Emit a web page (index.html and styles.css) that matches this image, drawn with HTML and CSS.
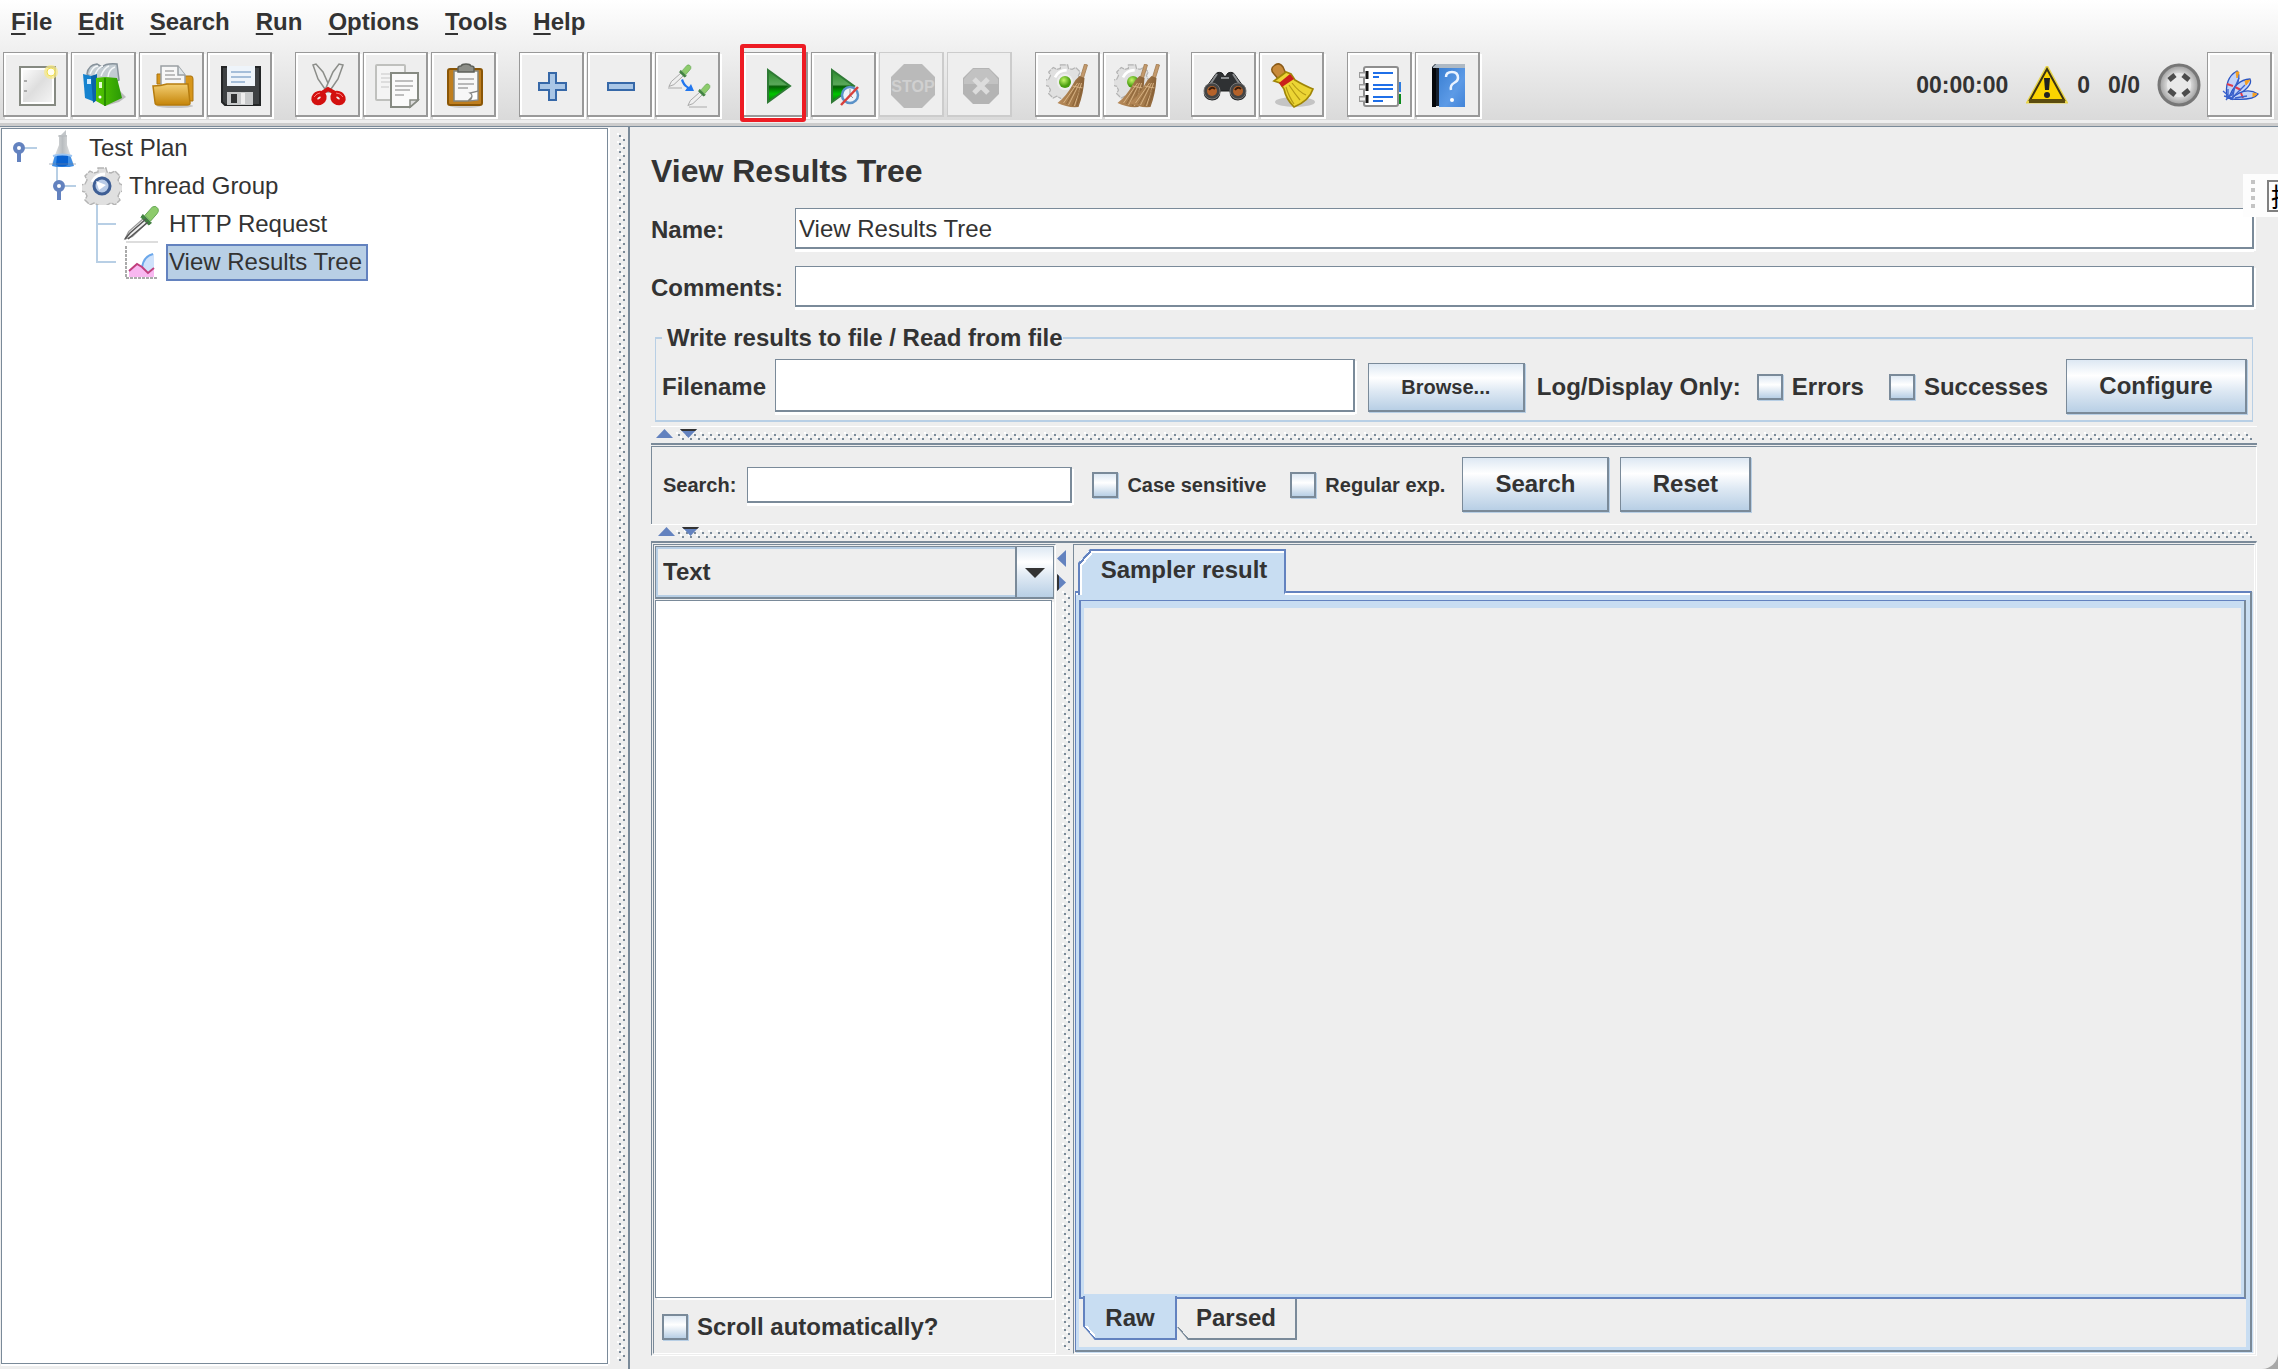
FILE: index.html
```html
<!DOCTYPE html>
<html lang="en">
<head>
<meta charset="utf-8">
<title>Apache JMeter</title>
<link rel="stylesheet" href="styles.css">
</head>
<body>
<svg width="0" height="0" class="defs" aria-hidden="true">
  <defs>
    <linearGradient id="paper" x1="0" y1="0" x2="1" y2="1"><stop offset="0" stop-color="#fbfbfb"/><stop offset=".5" stop-color="#dedede"/><stop offset="1" stop-color="#f4f4f4"/></linearGradient>
    <linearGradient id="folder" x1="0" y1="0" x2="0" y2="1"><stop offset="0" stop-color="#f3cf73"/><stop offset="1" stop-color="#c58408"/></linearGradient>
    <linearGradient id="green" x1="0" y1="0" x2="0" y2="1"><stop offset="0" stop-color="#2a8a2a"/><stop offset=".45" stop-color="#5aa85a"/><stop offset=".52" stop-color="#055f05"/><stop offset=".75" stop-color="#00c400"/><stop offset="1" stop-color="#0a7a0a"/></linearGradient>
    <linearGradient id="binder" x1="0" y1="0" x2="1" y2="0"><stop offset="0" stop-color="#55c800"/><stop offset="1" stop-color="#2b9a06"/></linearGradient>
    <linearGradient id="book" x1="0" y1="0" x2="1" y2="1"><stop offset="0" stop-color="#3a7fd2"/><stop offset=".6" stop-color="#5c9ae6"/><stop offset="1" stop-color="#4284d8"/></linearGradient>
    <linearGradient id="straw" x1="0" y1="0" x2="1" y2="0"><stop offset="0" stop-color="#b98b5a"/><stop offset=".5" stop-color="#a67c4c"/><stop offset="1" stop-color="#8a6238"/></linearGradient>
    <linearGradient id="glass" x1="0" y1="0" x2="1" y2="0"><stop offset="0" stop-color="#f2f2f2"/><stop offset=".5" stop-color="#b9bdc0"/><stop offset="1" stop-color="#f0f0f0"/></linearGradient>
    <radialGradient id="metal"><stop offset="0" stop-color="#fff"/><stop offset=".6" stop-color="#d8d8d8"/><stop offset="1" stop-color="#9a9a9a"/></radialGradient>
    <radialGradient id="ball" cx=".4" cy=".35"><stop offset="0" stop-color="#c6f76a"/><stop offset="1" stop-color="#4a9e10"/></radialGradient>
    <symbol id="gear" viewBox="-20 -20 40 40">
      <path d="M-4-18h8l1 4 4 1 4-2 5 5-2 4 2 4 3 1v6l-3 1-2 4 2 4-5 5-4-2-4 2-1 3h-7l-1-3-4-2-4 2-5-5 2-4-2-4-4-1v-6l4-1 2-4-2-4 5-5 4 2 4-1z" fill="#e0e0e0" stroke="#b4b4b4" stroke-width="1.4" stroke-dasharray="6 1"/>
      <path d="M-10-4Q-6-12 3-12" stroke="#fff" stroke-width="3" fill="none"/>
    </symbol>
    <symbol id="dropper" viewBox="0 0 40 40">
      <path d="M3 36 L7 28 L24 13 L28 17 L11 33Z" fill="#efefef" stroke="#999" stroke-width="1.3"/>
      <path d="M22 10 L31 19 L28 21 L20 13Z" fill="#3f853f" stroke="#3a743a"/>
      <path d="M24 11 L32 2 Q36 0 38 4 Q39 7 37 9 L30 17Z" fill="#8dcb6c" stroke="#62a451"/>
    </symbol>
    <symbol id="broom" viewBox="0 0 30 44">
      <path d="M27 0 L30 1 L26 14 L23 13Z" fill="#c49a6c" stroke="#a07b50" stroke-width=".8"/>
      <path d="M22 12 Q18 15 15 21 Q9 32 0 39 Q10 44 21 43 Q26 30 27 14Z" fill="url(#straw)"/>
      <path d="M20 19L6 39M22 19L11 41M24 19L17 42M15 22l10 2" stroke="#d7b283" stroke-width="1" fill="none"/>
      <path d="M18 24L9 40M23 24L15 42M25 24L19 42" stroke="#80592f" stroke-width=".6" fill="none"/>
    </symbol>
  </defs>
</svg>
<div class="app">
  <header class="top">
    <nav class="menubar" aria-label="Main menu">
      <button type="button"><u>F</u>ile</button>
      <button type="button"><u>E</u>dit</button>
      <button type="button"><u>S</u>earch</button>
      <button type="button"><u>R</u>un</button>
      <button type="button"><u>O</u>ptions</button>
      <button type="button"><u>T</u>ools</button>
      <button type="button"><u>H</u>elp</button>
    </nav>
    <div class="toolbar">
      <div class="group">
        <button type="button" class="tool" aria-label="New"><svg viewBox="1 1 62 62">
          <rect x="17" y="15" width="35" height="38" fill="#fff" stroke="#868a82" stroke-width="2"/><rect x="20" y="18" width="29" height="32" fill="url(#paper)"/>
          <path d="M21 29h3M21 39h3" stroke="#aaa" stroke-width="2"/><circle cx="48" cy="20" r="7" fill="#f7e98a" opacity=".75"/><circle cx="48" cy="20" r="4" fill="#fffef0" stroke="#f0de4c"/></svg></button>
        <button type="button" class="tool" aria-label="Templates"><svg viewBox="1 1 62 62">
          <path d="M46 36l9 9-7 5-14 4z" fill="#999" opacity=".6"/>
          <path d="M16 22q1-9 10-10l5 3q4-4 15-3l2 16-20 8z" fill="#c3ccd2" stroke="#87929b" stroke-width="1.5"/><path d="M19 22q3-8 8-8M24 23q3-8 8-9M30 24q3-8 8-10M37 25q1-8 7-10" stroke="#f4f7f9" stroke-width="1.5" fill="none"/>
          <path d="M12 22l12 3v25l-10-4z" fill="#1683cf"/><path d="M20 24l6-2v26l-4 3z" fill="#0b63a8"/><rect x="16" y="27" width="4" height="5" fill="#cdeaff"/>
          <path d="M25 26l9-1 12 1 5 20-17 8-9-5z" fill="url(#binder)"/><path d="M34 26v28" stroke="#1d7b00" stroke-width="1.5"/><rect x="28" y="30" width="3" height="6" fill="#e4ffd0"/><circle cx="29" cy="45" r="1.5" fill="#fff"/></svg></button>
        <button type="button" class="tool" aria-label="Open"><svg viewBox="1 1 62 62">
          <ellipse cx="36" cy="54" rx="18" ry="2" fill="#aaa" opacity=".6"/>
          <path d="M18 22h6v10H18zM42 24h10q2 0 2 3v22H42z" fill="#d7961b" stroke="#ab7410"/>
          <path d="M22 14h17l7 9v13H22z" fill="#f7f7f7" stroke="#9aa0a4" stroke-width="1.5"/><path d="M39 14v9h7" fill="#dfe6ea" stroke="#9aa0a4" stroke-width="1.5"/><path d="M26 19h9M26 23h10M26 27h16" stroke="#aaa" stroke-width="1.5"/>
          <path d="M14 34q8 0 14-2h21l2 19q0 2-3 2H19q-3 0-3-3z" fill="url(#folder)" stroke="#b67c0e" stroke-width="1.5"/></svg></button>
        <button type="button" class="tool" aria-label="Save"><svg viewBox="1 1 62 62">
          <path d="M15 15h38v38H18l-3-3z" fill="#3e4143" stroke="#232526" stroke-width="2"/>
          <rect x="20" y="14" width="28" height="20" fill="#eef4fa"/><path d="M24 20h20M24 25h20M24 30h14" stroke="#a5bed9" stroke-width="2"/>
          <rect x="20" y="40" width="26" height="13" fill="#c7c9ca"/><rect x="24" y="42" width="6" height="9" fill="#303233"/><path d="M36 41v11" stroke="#eee" stroke-width="4"/></svg></button>
      </div>
      <div class="group">
        <button type="button" class="tool" aria-label="Cut"><svg viewBox="1 1 62 62">
          <path d="M18 13l3-1 7 8 8 18-4 2-9-13z" fill="#eee" stroke="#8b8d89" stroke-width="1.5"/><path d="M48 13l-4-1-6 8-8 18 4 2 9-13z" fill="#eee" stroke="#8b8d89" stroke-width="1.5"/>
          <ellipse cx="24" cy="46" rx="5" ry="4" transform="rotate(-35 24 46)" fill="none" stroke="#d3100f" stroke-width="6"/><ellipse cx="43" cy="46" rx="5" ry="4" transform="rotate(35 43 46)" fill="none" stroke="#d3100f" stroke-width="6"/>
          <path d="M27 41l6-4 7 4" stroke="#d3100f" stroke-width="4" fill="none"/><path d="M19 45q3-4 6-4M41 41q5 0 7 4" stroke="#ff7a7a" fill="none"/></svg></button>
        <button type="button" class="tool" aria-label="Copy"><svg viewBox="1 1 62 62">
          <rect x="13" y="13" width="29" height="35" rx="1" fill="#f4f4f4" stroke="#bfc0bd" stroke-width="2"/><path d="M18 22h15M18 26h15M18 30h10M18 35h8" stroke="#d5d5d5" stroke-width="1.5"/>
          <path d="M28 21h27v27l-8 7H28z" fill="#fafafa" stroke="#868a82" stroke-width="2"/><path d="M32 29h18M32 34h18M32 38h15M32 43h9" stroke="#aaa" stroke-width="1.5"/><path d="M47 55v-7h8z" fill="#ddd" stroke="#868a82" stroke-width="1.5"/></svg></button>
        <button type="button" class="tool" aria-label="Paste"><svg viewBox="1 1 62 62">
          <ellipse cx="34" cy="54" rx="15" ry="2" fill="#aaa" opacity=".5"/><rect x="17" y="17" width="34" height="36" rx="2" fill="#bf7e1e" stroke="#8a5606" stroke-width="2"/>
          <path d="M23 19h24v20l-10 10H23z" fill="#f7f7f7" stroke="#82857e" stroke-width="1.5"/><path d="M27 27h16M27 32h16M27 36h10" stroke="#a4a4a4" stroke-width="1.6"/><path d="M47 39v9l-8 1q4-6 0-8z" fill="#fff" stroke="#888" stroke-width="1.3"/>
          <path d="M27 20v-4q0-2 3-2 1-2 5-2t5 2q3 0 3 2v4z" fill="#8c8e88" stroke="#5d605a" stroke-width="1.5"/></svg></button>
      </div>
      <div class="group">
        <button type="button" class="tool" aria-label="Expand all"><svg viewBox="1 1 62 62">
          <path d="M30 21h7v10h10v7H37v10h-7V38H20v-7h10z" fill="#a9c6e6" stroke="#3668a8" stroke-width="2"/></svg></button>
        <button type="button" class="tool" aria-label="Collapse all"><svg viewBox="1 1 62 62"><rect x="21" y="31" width="26" height="7" fill="#a9c6e6" stroke="#3668a8" stroke-width="2"/></svg></button>
        <button type="button" class="tool" aria-label="Toggle"><svg viewBox="1 1 62 62">
          <path d="M13 36h14M34 55h18" stroke="#aaa"/><use href="#dropper" x="12" y="12" width="25" height="25"/><use href="#dropper" x="31" y="31" width="25" height="25"/>
          <path d="M28 27q2 6 6 8l2-3 3 7-9 0 2-3q-5-3-6-8z" fill="#2277ee"/></svg></button>
      </div>
      <div class="group">
        <div class="marked">
          <button type="button" class="tool" aria-label="Start"><svg viewBox="1 1 62 62"><path d="M25 18L47 34 25 50z" fill="url(#green)" stroke="#2f7a35" stroke-width="2"/></svg></button>
        </div>
        <button type="button" class="tool" aria-label="Start no pauses"><svg viewBox="1 1 62 62"><path d="M21 18L43 34 21 50z" fill="url(#green)" stroke="#2f7a35" stroke-width="2"/>
          <circle cx="39" cy="43" r="8" fill="#eef3f9" stroke="#5b92c8" stroke-width="2.5"/><path d="M39 37v6l3 3" stroke="#999" fill="none"/><path d="M47 35L30 53" stroke="#d8403c" stroke-width="2.5"/></svg></button>
        <button type="button" class="tool" aria-label="Stop" disabled><svg viewBox="1 1 62 62"><path d="M25 12h18l13 13v18L43 56H25L12 43V25z" fill="#bababa"/><text x="34" y="40" class="stop-word">STOP</text></svg></button>
        <button type="button" class="tool" aria-label="Shutdown" disabled><svg viewBox="1 1 62 62"><path d="M26 16h16l10 10v16L42 52H26L16 42V26z" fill="#b4b4b4"/><path d="M17 27L26 17h16l9 10v5H17z" fill="#c2c2c2"/><path d="M27 27l14 14M41 27L27 41" stroke="#dcdcdc" stroke-width="5"/></svg></button>
      </div>
      <div class="group">
        <button type="button" class="tool" aria-label="Clear"><svg viewBox="1 1 62 62"><use href="#gear" x="11" y="11" width="36" height="36"/><circle cx="30" cy="30" r="8" fill="#eee" /><circle cx="30" cy="30" r="6" fill="url(#ball)"/><use href="#broom" x="22" y="12" width="31" height="44"/></svg></button>
        <button type="button" class="tool" aria-label="Clear all"><svg viewBox="1 1 62 62"><use href="#gear" x="11" y="11" width="36" height="36"/><circle cx="30" cy="30" r="6" fill="url(#ball)"/><use href="#broom" x="14" y="12" width="31" height="44"/><use href="#broom" x="26" y="12" width="31" height="44"/></svg></button>
      </div>
      <div class="group">
        <button type="button" class="tool" aria-label="Search"><svg viewBox="1 1 62 62">
          <path d="M24 23q2-4 7-2l3 4 3-4q5-2 7 2l10 14q3 10-7 11-8 0-8-9h-10q0 9-8 9-10-1-7-11z" fill="#2f3133" stroke="#1b1c1d"/>
          <path d="M18 34l8-12M42 22l8 12M30 26h8" stroke="#8b8e90" stroke-width="2" fill="none"/><circle cx="21" cy="39" r="8" fill="#444" stroke="#777"/><circle cx="21" cy="39" r="5" fill="#b5622a"/><circle cx="47" cy="39" r="8" fill="#444" stroke="#777"/><circle cx="47" cy="39" r="5" fill="#b5622a"/><path d="M18 38q3-4 6-1M44 38q3-4 6-1" stroke="#3b1c08" stroke-width="2" fill="none"/></svg></button>
        <button type="button" class="tool" aria-label="Reset search"><svg viewBox="1 1 62 62">
          <ellipse cx="36" cy="50" rx="20" ry="5" fill="#999" opacity=".5"/><path d="M16 13q5-3 8 2l4 9-7 5-6-7q-5-5 1-9z" fill="#c88a3a" stroke="#8a5a17" stroke-width="1.5"/>
          <path d="M15 29l12-9 5 2 4 6q10 6 18 9-4 12-19 18-8-8-10-18l-4-6z" fill="#ecd534" stroke="#a08608" stroke-width="1.7"/><path d="M20 31l11-9 4 5-12 8z" fill="#c9201c"/><path d="M27 35q3 10 8 17M30 33q6 9 11 15M33 31q7 9 14 12" stroke="#b59a15" stroke-width="1.2" fill="none"/></svg></button>
      </div>
      <div class="group">
        <button type="button" class="tool" aria-label="Function helper"><svg viewBox="1 1 62 62">
          <rect x="49" y="30" width="5" height="10" fill="#2f7de0"/><rect x="49" y="42" width="5" height="10" fill="#0c8a1c"/><rect x="17" y="15" width="34" height="39" rx="2" fill="#fff" stroke="#8e8e8e" stroke-width="2"/>
          <path d="M12 23h6M12 35h6M12 47h6" stroke="#999" stroke-width="6"/><path d="M13 23h5M13 35h5M13 47h5" stroke="#eee" stroke-width="3"/><path d="M20 19v8M20 31v8M20 43v8" stroke="#111" stroke-width="3"/>
          <path d="M26 21h20M26 25h6M26 33h20M26 37h20M26 45h20M26 49h10" stroke="#1f6fe8" stroke-width="2"/></svg></button>
        <button type="button" class="tool" aria-label="Help"><svg viewBox="1 1 62 62">
          <path d="M17 15l3-3h30v42H17z" fill="#16202d"/><path d="M18 15l3-3h29v4H18z" fill="#aeb9c4"/><path d="M24 16h26v39H24z" fill="url(#book)"/><path d="M17 16h4v39h-4z" fill="#05070a"/><path d="M31 25q0-5 6-5t6 6q0 3-4 5t-3 7" stroke="#eaf3ff" stroke-width="2.5" fill="none"/><circle cx="37" cy="48" r="2" fill="#fff"/></svg></button>
      </div>
      <div class="status">
        <span class="timer">00:00:00</span>
        <svg class="warn" viewBox="0 0 42 38" aria-label="Errors logged"><path d="M21 1L40 36H2z" fill="#fbd300" stroke="#e8d44a" stroke-width="3"/><path d="M21 3L38 34H4z" fill="#fbd300" stroke="#3d3413" stroke-width="2"/><path d="M3 35h36" stroke="#5c4c0e" stroke-width="4"/><path d="M18 12h6l-1 12h-4z" fill="#222"/><circle cx="21" cy="29" r="3" fill="#222"/></svg>
        <span class="errors">0</span>
        <span class="threads">0/0</span>
        <svg class="remote" viewBox="0 0 44 44" aria-label="Remote hosts"><circle cx="22" cy="22" r="20" fill="url(#metal)" stroke="#777" stroke-width="3"/><circle cx="22" cy="22" r="12" fill="#e9e9e9"/><path d="M12 17l6-5M26 12l6 5M12 27l6 5M26 32l6-5" stroke="#4c4c4c" stroke-width="5"/></svg>
        <button type="button" class="tool" aria-label="About"><svg viewBox="1 1 62 62">
          <g fill="#c3d3f7" stroke="#2a55c4" stroke-width="1.3"><path d="M20 46Q17 26 30 19 36 26 23 46z"/><path d="M22 46Q28 28 43 27 47 34 25 47z"/><path d="M24 47Q38 34 51 42 46 49 24 47z"/></g>
          <path d="M29 20l3 0-2 6zM38 29l5-1-4 5zM46 41l4 1-4 3z" fill="#f6a020" stroke="#f6a020"/><path d="M20 32l6 2M28 35l6 3M34 41l2 5" stroke="#e23a4a" stroke-width="2"/><path d="M16 39l8 7M19 48l5-6M21 37v10M25 48l3-14M24 44l8-18M26 45l12-12M28 46l12-2M17 44l8 2" stroke="#3a62cc" stroke-width="1.3"/></svg></button>
      </div>
    </div>
  </header>

  <main class="work">
    <section class="tree" aria-label="Test plan tree">
      <ul>
        <li class="row">
          <svg class="guide" width="46" height="38" viewBox="0 0 46 38"><path d="M23 19h12" stroke="#b8cfe5" stroke-width="2"/><path d="M17 22v11" stroke="#6382bf" stroke-width="4"/><circle cx="17" cy="19" r="4" fill="#fff" stroke="#6382bf" stroke-width="4"/></svg>
          <svg class="node" width="38" height="38" viewBox="0 0 38 38"><path d="M11 6h8v10l7 20H3l8-20z" fill="url(#glass)"/><path d="M18 1v6h-6z" fill="#c2c6c9"/><path d="M10 7h9" stroke="#b4b8bb"/><path d="M7 26h15l4 11q-11 3-22 0z" fill="#3f8fe6"/><path d="M9 26h11v10q-6 3-12 0z" fill="#0a62d0"/><path d="M5 27q9-3 19 0" stroke="#9ec6f2" stroke-width="2" fill="none"/><path d="M1 35h27" stroke="#78869a" opacity=".6"/></svg>
          <span>Test Plan</span>
        </li>
        <li class="row">
          <svg class="guide" width="80" height="38" viewBox="0 0 80 38"><path d="M55 0v14M63 19h11" stroke="#b8cfe5" stroke-width="2"/><path d="M57 22v11" stroke="#6382bf" stroke-width="4"/><circle cx="57" cy="19" r="4" fill="#fff" stroke="#6382bf" stroke-width="4"/></svg>
          <svg class="node wide" width="40" height="38" viewBox="0 0 40 38"><use href="#gear" x="0" y="-1" width="40" height="40"/><circle cx="20" cy="19" r="8" fill="#b9cbe6" stroke="#3f5f95" stroke-width="3"/><path d="M14 14l10 4-7 5z" fill="#fff"/></svg>
          <span>Thread Group</span>
        </li>
        <li class="row">
          <svg class="guide" width="120" height="38" viewBox="0 0 120 38"><path d="M95 0v38M95 19h19" stroke="#b8cfe5" stroke-width="2"/></svg>
          <svg class="node wide" width="40" height="38" viewBox="0 0 40 38"><path d="M4 37h32" stroke="#bbb"/><use href="#dropper" x="0" y="0" width="38" height="38"/><path d="M3 34l5-6 16-14M6 34l20-17" stroke="#555" stroke-width="1.5" fill="none"/></svg>
          <span>HTTP Request</span>
        </li>
        <li class="row">
          <svg class="guide" width="120" height="38" viewBox="0 0 120 38"><path d="M95 0v19h19" stroke="#b8cfe5" stroke-width="2" fill="none"/></svg>
          <svg class="node wide" width="40" height="38" viewBox="0 0 40 38"><path d="M4 3v32h32" stroke="#aaa" stroke-width="2" stroke-dasharray="3 1" fill="none"/><path d="M7 34v-7l7-6 7 3 5 6 6-4v8z" fill="#f8b8f0"/><path d="M20 24q2-12 12-13v15l-6 4z" fill="#cfe2fb"/><path d="M20 24q2-11 11-13" stroke="#6ba7ea" stroke-width="2" fill="none"/><path d="M7 28l8-7 5 3 6 6 6-5" stroke="#c13f7d" stroke-width="2" fill="none"/></svg>
          <span class="selected">View Results Tree</span>
        </li>
      </ul>
    </section>
    <div class="split-v"></div>
    <section class="editor">
      <div class="heading"><h1>View Results Tree</h1></div>
      <div class="fields">
        <label for="name">Name:</label><input id="name" type="text" value="View Results Tree">
        <label for="comments">Comments:</label><input id="comments" type="text">
      </div>
      <fieldset class="file">
        <legend>Write results to file / Read from file</legend>
        <div class="file-row">
          <label for="filename">Filename</label><input id="filename" type="text">
          <button type="button" class="btn browse">Browse...</button>
          <span class="log">Log/Display Only:</span>
          <label class="check errors-only"><input type="checkbox">Errors</label>
          <label class="check success-only"><input type="checkbox">Successes</label>
          <button type="button" class="btn configure">Configure</button>
        </div>
      </fieldset>
      <div class="split-h"><i class="up"></i><i class="down"></i></div>
      <div class="search-frame">
        <div class="search-row">
          <label for="search">Search:</label><input id="search" type="text">
          <label class="check case"><input type="checkbox">Case sensitive</label>
          <label class="check regex"><input type="checkbox">Regular exp.</label>
          <button type="button" class="btn search-btn">Search</button>
          <button type="button" class="btn reset-btn">Reset</button>
        </div>
      </div>
      <div class="split-h second"><i class="up"></i><i class="down"></i></div>
      <div class="results">
        <div class="list-side">
          <div class="combo"><select aria-label="Renderer"><option>Text</option></select></div>
          <div class="list"></div>
          <label class="check scroll"><input type="checkbox">Scroll automatically?</label>
        </div>
        <div class="split-v inner"><i class="left"></i><i class="right"></i></div>
        <div class="tab-side">
          <div class="tabs" role="tablist"><button type="button" class="tab" role="tab" aria-selected="true">Sampler result</button></div>
          <div class="pane">
            <div class="pane-inner"><div class="output"></div></div>
            <div class="bottom-tabs" role="tablist">
              <button type="button" class="btab active" role="tab" aria-selected="true">Raw</button>
              <button type="button" class="btab" role="tab" aria-selected="false">Parsed</button>
            </div>
          </div>
        </div>
      </div>
    </section>
  </main>
  <aside class="ime" aria-label="Input method bar"><span class="grip"></span><span class="glyph" lang="zh">拼</span></aside>
</div>
</body>
</html>
```

FILE: styles.css
```css
:root {
  --line: #7a8a99;
  --blue: #6382bf;
  --pale: #b8cfe5;
  --fill: #c8ddf2;
  --bg: #eeeeee;
  --ink: #333333;
}
*, *::before, *::after { box-sizing: border-box; }
html, body { height: 100%; }
body { margin: 0; background: #a8a8a8; font: bold 24px/28px "Liberation Sans", Arial, sans-serif; color: var(--ink); }
button, input, select { font: inherit; color: inherit; border-radius: 0; margin: 0; }
.defs { position: absolute; }
.app { position: relative; display: flex; flex-direction: column; min-height: 100%; background: var(--bg); border-radius: 0 0 16px 0; overflow: hidden; }

/* Menu and toolbar */
.top { background: linear-gradient(#ffffff, #dadada 120px, var(--bg) 120px 123px, #cccccc 123px); height: 126px; }
.menubar { display: flex; gap: 26px; padding: 0 11px; height: 44px; align-items: center; }
.menubar button { border: 0; padding: 0; background: none; }
.menubar u { text-decoration-thickness: 2px; text-underline-offset: 3px; }
.toolbar { display: flex; gap: 20px; padding: 8px 4px 0 3px; }
.group { display: flex; gap: 3px; padding-right: 3px; }
.tool { display: block; flex: none; width: 65px; height: 65px; padding: 0; border: solid #999999; border-width: 1px 2px 2px 1px; background: var(--bg); box-shadow: 2px 2px 0 #fff, inset 2px 2px 0 #fff; }
.tool svg { display: block; width: 62px; height: 62px; }
.tool:disabled { border-color: #cccccc; box-shadow: none; }
.stop-word { font: bold 16px "Liberation Sans", Arial, sans-serif; text-anchor: middle; fill: #d0d0d0; }
.marked { position: relative; }
.marked::after { content: ""; position: absolute; left: -3px; top: -8px; width: 66px; height: 78px; border: 4px solid #ed1c24; border-radius: 3px; pointer-events: none; }
.status { display: flex; align-items: center; margin-left: auto; font-size: 23px; }
.warn { width: 42px; height: 38px; margin: 0 9px 0 18px; }
.threads { margin: 0 17px 0 18px; }
.remote { width: 44px; height: 44px; margin-right: 6px; }
.status .tool { margin-right: 2px; }

/* Work area */
.work { display: flex; flex: 1; border-top: 1px solid var(--line); }
.tree { flex: none; width: 607px; margin: 1px 1px 5px 1px; border: 1px solid var(--line); background: #fff; box-shadow: 2px 0 0 #fff, 0 2px 0 #fff; font-weight: normal; }
.tree ul { list-style: none; margin: 0; padding: 0; }
.row { display: flex; height: 38px; line-height: 38px; }
.row svg { flex: none; }
.row span { padding-left: 3px; }
.row .selected { height: 37px; margin: 1px 0 0 4px; padding: 0 4px 0 1px; line-height: 32px; border: 2px solid var(--blue); background: var(--pale); }
.row .wide + span:not(.selected) { padding-left: 7px; }
.split-v { flex: none; width: 19px; position: relative; }
.split-v::before, .split-h::before {
  content: "";
  position: absolute;
  background-image:
    conic-gradient(from 90deg at 6px 6px, var(--line) 90deg, transparent 0),
    conic-gradient(from 270deg at 2px 2px, #fff 90deg, transparent 0),
    conic-gradient(from 270deg at 2px 2px, #fff 90deg, transparent 0),
    conic-gradient(from 270deg at 2px 2px, var(--line) 90deg, transparent 0);
  background-position: 0 0, 0 0, 4px 4px, 2px 2px;
  background-size: 8px 8px;
}
.split-v::before { top: 6px; bottom: 8px; left: 8px; width: 8px; }

/* Editor */
.editor { flex: 1; min-width: 0; display: flex; flex-direction: column; padding: 25px 21px 13px 21px; border-left: 2px solid var(--line); }
h1 { margin: 0 0 18px; font-size: 32px; line-height: 38px; }
.editor input[type="text"] { display: block; padding: 2px 3px 0; font-weight: normal; background: #fff; border: solid var(--line); border-width: 1px 2px 2px 1px; box-shadow: 0 3px 0 #fff, 2px 2px 0 #fff; outline: 0; }
.fields { display: grid; grid-template-columns: 144px 1fr; gap: 17px 0; align-items: center; margin: 0 3px 17px 0; }
.fields label { padding-top: 2px; }
.fields input { width: 100%; height: 41px; }
.file { margin: 0 4px 4px; min-width: 0; padding: 7px 5px 6px 6px; border: solid var(--pale); border-width: 2px 1px; }
.file legend { margin: 0; padding: 0 0 0 5px; }
.file-row { display: flex; align-items: center; }
#filename { flex: 1; min-width: 0; height: 53px; align-self: flex-start; margin: 0 13px 0 9px; }
.btn { padding: 0; border: solid var(--line); border-width: 1px 2px 2px 1px; background: linear-gradient(#dde8f3, #ffffff 30%, #dde8f3 60%, var(--pale)); box-shadow: 1px 1px 0 var(--pale); height: 55px; }
.browse { width: 157px; height: 49px; align-self: flex-end; margin-bottom: 2px; font-size: 20px; }
.log { padding: 0 16px 0 12px; }
.check { display: flex; align-items: center; gap: 9px; white-space: nowrap; }
.check input { appearance: none; flex: none; width: 26px; height: 26px; border: 2px solid var(--line); background: linear-gradient(#dde8f3, #ffffff 40%, var(--pale)); box-shadow: 1px 1px 0 var(--pale); }
.success-only { margin: 0 18px 0 25px; }
.configure { width: 181px; }
.split-h { position: relative; flex: none; height: 17px; border-top: 1px solid #fff; }
.split-h::before { left: 25px; right: 5px; top: 5px; height: 8px; }
.split-h i, .inner i { position: absolute; background: var(--blue); }
.split-h i { width: 17px; height: 9px; top: 2px; }
.split-h .up { left: 5px; clip-path: polygon(50% 0, 100% 100%, 0 100%); }
.split-h .down { left: 29px; border-top: 2px solid var(--ink); clip-path: polygon(0 0, 100% 0, 50% 100%); }
.second .up { left: 7px; }
.second .down { left: 31px; }
.search-frame { border-top: 2px solid var(--line); padding-top: 1px; font-size: 20px; }
.search-row { display: flex; align-items: center; height: 78px; padding: 0 11px 2px; border: solid; border-width: 1px 1px 0; border-color: var(--line) #fff; border-left-color: var(--line); }
#search { width: 325px; height: 36px; margin: 0 20px 0 11px; }
.regex { margin: 0 17px 0 24px; }
.search-btn, .reset-btn { font-size: 24px; }
.search-btn { width: 147px; margin-right: 11px; }
.reset-btn { width: 131px; }

/* Results */
.results { flex: 1; display: flex; border: solid; border-width: 2px 1px 1px; border-color: var(--line) #fff #fff var(--line); padding: 1px; }
.list-side { flex: none; width: 403px; display: flex; flex-direction: column; border: 1px solid; border-color: var(--line) #fff #fff var(--line); padding: 1px 1px 0; }
.combo { position: relative; height: 53px; border: solid var(--line); border-width: 1px 1px 2px; }
.combo select { display: block; appearance: none; width: 100%; height: 100%; border: 2px solid var(--pale); background: var(--bg); padding: 0 5px; }
.combo::before { content: ""; position: absolute; right: 0; top: 0; bottom: 0; width: 38px; border-left: 2px solid var(--line); background: linear-gradient(#dde8f3, #ffffff 30%, #dde8f3 60%, var(--pale)); pointer-events: none; }
.combo::after { content: ""; position: absolute; right: 8px; top: 21px; width: 20px; height: 10px; background: var(--ink); clip-path: polygon(0 0, 100% 0, 50% 100%); pointer-events: none; }
.list { flex: 1; margin: 1px 2px 0 0; border: 1px solid var(--line); background: #fff; box-shadow: 2px 2px 0 #fff; }
.scroll { height: 55px; padding: 2px 0 0 7px; }
.inner { width: 17px; }
.inner::before { left: 6px; top: 47px; bottom: 4px; }
.inner i { width: 9px; height: 17px; left: 1px; }
.inner .left { top: 6px; clip-path: polygon(100% 0, 100% 100%, 0 50%); }
.inner .right { top: 30px; border-left: 2px solid var(--ink); clip-path: polygon(0 0, 100% 50%, 0 100%); }
.tab-side { flex: 1; min-width: 0; display: flex; flex-direction: column; border: 1px solid; border-color: var(--line) #fff #fff var(--line); padding: 4px 2px 1px 1px; }
.tabs { display: flex; padding-left: 3px; }
.tab { position: relative; z-index: 1; width: 208px; height: 46px; margin-bottom: -4px; padding: 0 0 6px 4px; border: solid var(--blue); border-width: 2px 2px 0; background: var(--fill); box-shadow: inset 2px 2px 0 #fff; clip-path: polygon(12px 0, 100% 0, 100% 42px, calc(100% - 2px) 46px, 0 46px, 0 14px); }
.tab::before { content: ""; position: absolute; left: -2px; top: -2px; width: 14px; height: 16px; background: linear-gradient(to bottom right, transparent 46%, var(--blue) 46% 56%, #fff 56% 66%, transparent 66%); }
.pane { flex: 1; display: flex; flex-direction: column; border: solid; border-width: 2px 2px 2px 1px; border-color: var(--blue) var(--line) var(--line) var(--blue); background: var(--fill); box-shadow: inset 0 2px 0 #fff, 1px 1px 0 var(--fill); padding: 7px 4px 3px 3px; }
.pane-inner { flex: 1; display: flex; padding: 7px 3px 3px; border: solid; border-width: 1px 2px 2px 2px; border-color: var(--blue) var(--line) var(--blue) var(--blue); }
.output { flex: 1; background: var(--bg); }
.bottom-tabs { display: flex; height: 48px; padding-left: 4px; background: var(--bg); }
.btab { position: relative; width: 120px; height: 41px; padding: 0 0 2px; border: solid var(--line); border-width: 0 2px 2px 0; background: var(--bg); clip-path: polygon(0 0, 100% 0, 100% 100%, 11px 100%, 0 28px); }
.btab::before { content: ""; position: absolute; left: 0; bottom: -2px; width: 11px; height: 13px; background: linear-gradient(to top right, transparent 46%, var(--line) 46% 58%, transparent 58%); }
.btab.active { z-index: 1; width: 94px; height: 44px; margin-top: -3px; padding-top: 3px; border-color: var(--blue); border-left-width: 2px; background: var(--fill); clip-path: polygon(0 0, 100% 0, 100% 100%, 12px 100%, 0 30px); }
.btab.active::before { left: -2px; width: 12px; height: 14px; background: linear-gradient(to top right, transparent 46%, var(--blue) 46% 58%, #fff 58% 68%, transparent 68%); }

/* Floating input-method bar, cut by the window's right edge */
.ime { position: absolute; top: 174px; right: 0; display: flex; width: 35px; height: 43px; padding: 6px 0 5px 8px; overflow: hidden; background: #fdfdfd; }
.grip { flex: none; width: 4px; margin-right: 12px; background: repeating-linear-gradient(#c4c4c4 0 4px, transparent 4px 8px); }
.glyph { flex: none; width: 36px; height: 32px; border: 2px solid #808080; color: #000; font: 26px/28px "Noto Sans CJK SC", sans-serif; padding-left: 2px; }
```
